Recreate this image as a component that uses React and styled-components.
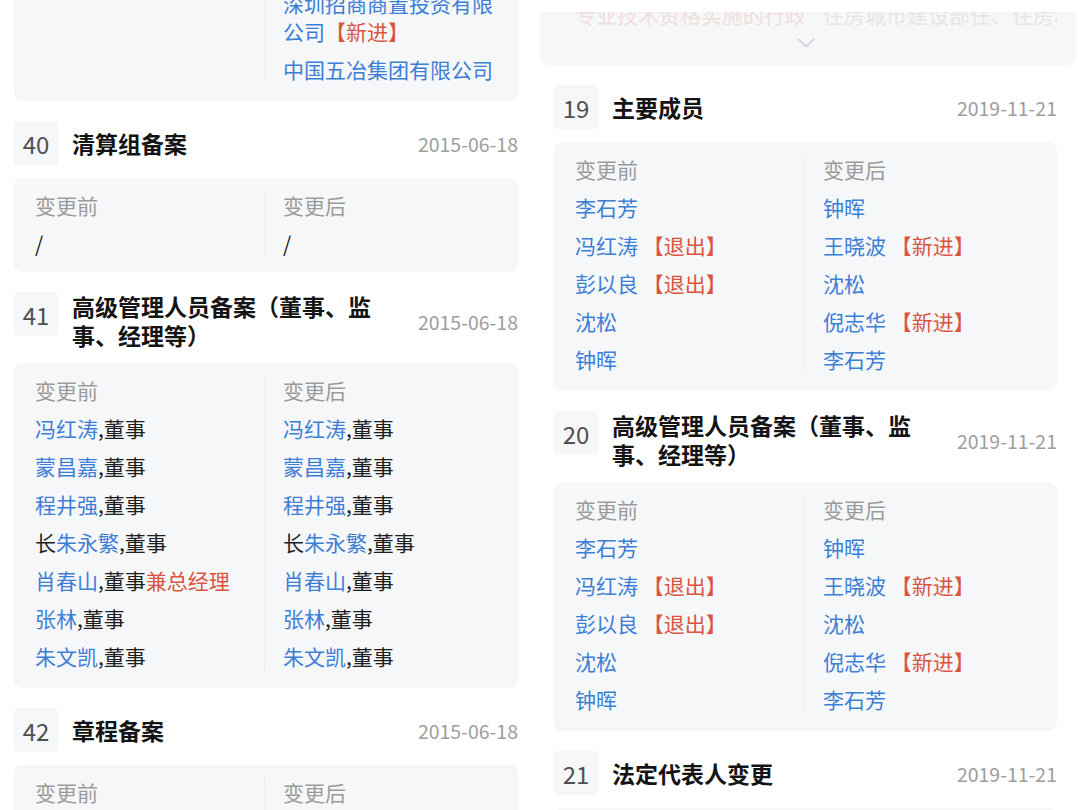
import React from "react"
import styled, { createGlobalStyle } from "styled-components"

const GlobalStyle = createGlobalStyle`
  html, body {
    margin: 0;
    padding: 0;
    background: #fff;
  }
  body {
    font-family: "Noto Sans CJK SC", "Noto Sans", sans-serif;
    overflow: hidden;
  }
`

const tones = {
    b: "#3d7ed6",
    r: "#d9553f",
    k: "#1e1e1e",
}

const Page = styled.div`
    display: flex;
    width: 1080px;
    height: 810px;
    overflow: hidden;
    background: #fff;
`

const Column = styled.div`
    width: 540px;
    flex-shrink: 0;
    box-sizing: border-box;
    padding: ${p => p.$pad};
    display: flex;
    flex-direction: column;
`

const Card = styled.div`
    flex-shrink: 0;
    display: grid;
    grid-template-columns: 250px 1fr;
    padding: 13px 0 ${p => p.$pb ?? 18}px;
    margin-top: ${p => p.$top ?? 13}px;
    background: #f6f7f9;
    border-radius: 8px;
`

const Half = styled.div`
    display: flex;
    flex-direction: column;
    gap: 10px;
    min-width: 0;
    padding: ${p => p.$right ? "0 21px 0 18px" : "0 12px 0 21px"};
    border-left: ${p => p.$right ? "1px solid #eceef2" : "none"};
`

const Label = styled.div`
    font-size: 21px;
    line-height: 28px;
    color: #9b9b9b;
`

const Line = styled.div`
    font-size: 21px;
    line-height: 28px;
    color: ${tones.k};
`

const Part = styled.span`
    color: ${p => tones[p.$tone] || tones.k};
`

const Header = styled.div`
    flex-shrink: 0;
    display: flex;
    align-items: flex-start;
    margin-top: 20px;
`

const NumBox = styled.div`
    width: 44px;
    height: 44px;
    flex-shrink: 0;
    display: flex;
    align-items: center;
    justify-content: center;
    border-radius: 4px;
    background: #f6f7f9;
    font-size: 24px;
    color: #505050;
`

const Title = styled.div`
    flex: 0 1 312px;
    margin-left: 14px;
    min-height: 44px;
    display: flex;
    align-items: center;
    font-size: 23px;
    line-height: 29px;
    font-weight: 700;
    color: #141414;
`

const DateText = styled.div`
    margin-left: auto;
    align-self: center;
    font-size: 19.5px;
    color: #9e9e9e;
    white-space: nowrap;
`

const FadeCard = styled.div`
    flex-shrink: 0;
    height: 53px;
    margin: 12px -19px 0 -14px;
    padding: 0 19px 0 14px;
    background: #f6f7f9;
    border-radius: 0 0 8px 8px;
    overflow: hidden;
`

const FadeRow = styled.div`
    display: grid;
    grid-template-columns: 250px 1fr;
    margin-top: -12px;
    font-size: 21px;
    line-height: 28px;
`

const FadeText = styled.div`
    padding: ${p => p.$right ? "0 0 0 19px" : "0 12px 0 21px"};
    white-space: nowrap;
    overflow: hidden;
    color: ${p => p.$right ? "#ebe3e4" : "#f0dedb"};
`

const Expand = styled.div`
    display: flex;
    justify-content: center;
    margin-top: 10px;
`

const Chevron = () => (
    <svg width="18" height="10" viewBox="0 0 18 10">
        <polyline points="1,1 9,8.5 17,1" fill="none" stroke="#c8cbd0" strokeWidth="1.4" />
    </svg>
)

const Entry = ({ parts }) => (
    <Line>
        {parts.map(([text, tone], i) => <Part key={i} $tone={tone}>{text}</Part>)}
    </Line>
)

const ChangeCard = ({ before, after, top, pb }) => (
    <Card $top={top} $pb={pb}>
        <Half>
            <Label>变更前</Label>
            {before.map((parts, i) => <Entry key={i} parts={parts} />)}
        </Half>
        <Half $right>
            <Label>变更后</Label>
            {after.map((parts, i) => <Entry key={i} parts={parts} />)}
        </Half>
    </Card>
)

const RecordHeader = ({ num, title, date }) => (
    <Header>
        <NumBox>{num}</NumBox>
        <Title>{title}</Title>
        <DateText>{date}</DateText>
    </Header>
)

const directors = (extra) => [
    [["冯红涛", "b"], [",董事"]],
    [["蒙昌嘉", "b"], [",董事"]],
    [["程井强", "b"], [",董事"]],
    [["长"], ["朱永繁", "b"], [",董事"]],
    extra ? [["肖春山", "b"], [",董事"], ["兼总经理", "r"]] : [["肖春山", "b"], [",董事"]],
    [["张林", "b"], [",董事"]],
    [["朱文凯", "b"], [",董事"]],
]

const membersBefore = [
    [["李石芳", "b"]],
    [["冯红涛", "b"], [" 【退出】", "r"]],
    [["彭以良", "b"], [" 【退出】", "r"]],
    [["沈松", "b"]],
    [["钟晖", "b"]],
]

const membersAfter = [
    [["钟晖", "b"]],
    [["王晓波", "b"], [" 【新进】", "r"]],
    [["沈松", "b"]],
    [["倪志华", "b"], [" 【新进】", "r"]],
    [["李石芳", "b"]],
]

const App = () => {
    return (
        <>
            <GlobalStyle />
            <Page>
                <Column $pad="0 22px 0 14px">
                    <ChangeCard
                        top={-100}
                        before={[[["中冶置业集团有限公司", "b"]]]}
                        after={[
                            [["中冶置业集团有限公司", "b"]],
                            [["深圳招商商置投资有限公司", "b"], ["【新进】", "r"]],
                            [["中国五冶集团有限公司", "b"]],
                        ]}
                    />
                    <RecordHeader num="40" title="清算组备案" date="2015-06-18" />
                    <ChangeCard pb={15} before={[[["/"]]]} after={[[["/"]]]} />
                    <RecordHeader num="41" title="高级管理人员备案（董事、监事、经理等）" date="2015-06-18" />
                    <ChangeCard before={directors(true)} after={directors(false)} />
                    <RecordHeader num="42" title="章程备案" date="2015-06-18" />
                    <ChangeCard before={[[["/"]]]} after={[[["/"]]]} />
                </Column>
                <Column $pad="0 23px 0 14px">
                    <FadeCard>
                        <FadeRow>
                            <FadeText>专业技术资格实施的行政许可和认定</FadeText>
                            <FadeText $right>住房城市建设部任、住房和城乡</FadeText>
                        </FadeRow>
                        <Expand><Chevron /></Expand>
                    </FadeCard>
                    <RecordHeader num="19" title="主要成员" date="2019-11-21" />
                    <ChangeCard before={membersBefore} after={membersAfter} />
                    <RecordHeader num="20" title="高级管理人员备案（董事、监事、经理等）" date="2019-11-21" />
                    <ChangeCard before={membersBefore} after={membersAfter} />
                    <RecordHeader num="21" title="法定代表人变更" date="2019-11-21" />
                    <ChangeCard before={[[["肖春山", "b"]]]} after={[[["钟晖", "b"]]]} />
                </Column>
            </Page>
        </>
    )
}

export default App
